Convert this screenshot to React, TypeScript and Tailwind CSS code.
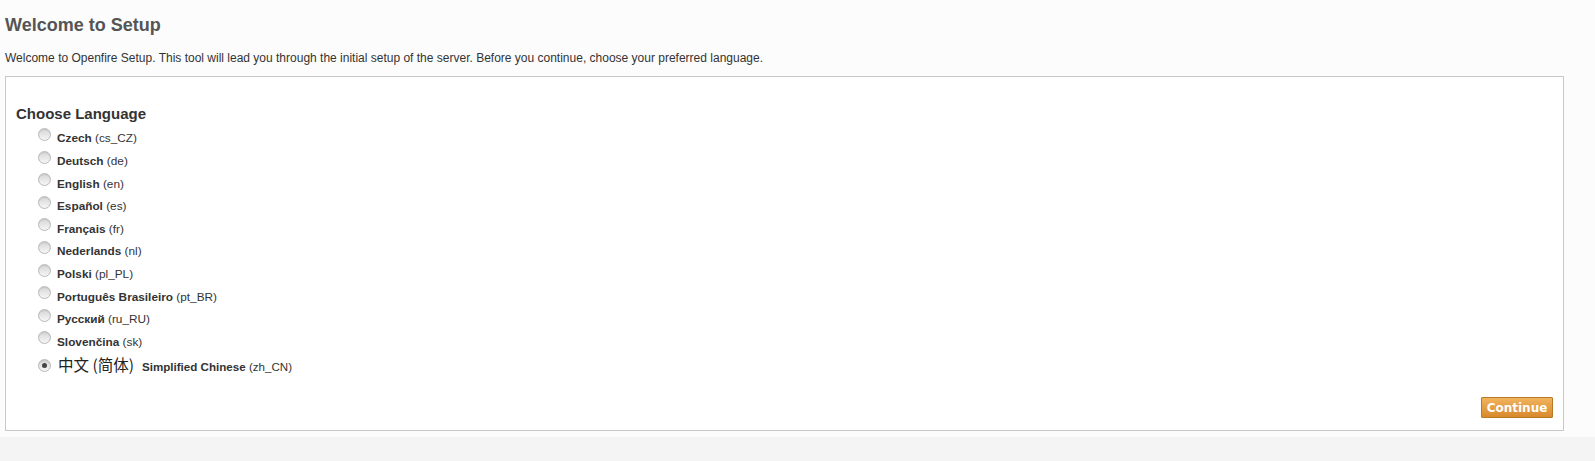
import React from 'react';

const languages: { name: string; code: string }[] = [
  { name: 'Czech', code: 'cs_CZ' },
  { name: 'Deutsch', code: 'de' },
  { name: 'English', code: 'en' },
  { name: 'Español', code: 'es' },
  { name: 'Français', code: 'fr' },
  { name: 'Nederlands', code: 'nl' },
  { name: 'Polski', code: 'pl_PL' },
  { name: 'Português Brasileiro', code: 'pt_BR' },
  { name: 'Русский', code: 'ru_RU' },
  { name: 'Slovenčina', code: 'sk' },
];

function Radio({ checked }: { checked?: boolean }) {
  return (
    <span className="relative inline-flex h-[13px] w-[13px] shrink-0 items-center justify-center rounded-full border border-[#b9b9b9] bg-gradient-to-b from-[#d6d6d6] to-[#f6f6f6] shadow-[inset_0_1px_1px_rgba(0,0,0,0.08)]">
      {checked && <span className="h-[5px] w-[5px] rounded-full bg-[#444]" />}
    </span>
  );
}

export default function App() {
  return (
    <div className="h-[461px] bg-[#f4f4f4] font-['Liberation_Sans',Arial,sans-serif] text-[#333]">
      <div className="bg-[#fcfcfc] pl-[5px] pr-[31px] pt-[14px] pb-[6px]">
        <h1 className="text-[18px] font-bold leading-[22px] text-[#555]">Welcome to Setup</h1>
        <p className="mt-[15px] text-[12px] leading-[14px] text-[#333]">
          Welcome to Openfire Setup. This tool will lead you through the initial setup of the server. Before you continue, choose your preferred language.
        </p>
        <div className="mt-[11px] flex h-[355px] flex-col border border-[#c9c9c9] bg-white pl-[10px] pr-[10px] pt-[28px]">
          <h2 className="text-[15px] font-bold leading-[18px] text-[#333]">Choose Language</h2>
          <ul className="mt-[5px] pl-[22px]">
            {languages.map((l) => (
              <li key={l.code} className="flex h-[22.6px] items-center gap-[6px] text-[11.8px]">
                <span className="-mt-[4px]"><Radio /></span>
                <span>
                  <b>{l.name}</b> ({l.code})
                </span>
              </li>
            ))}
            <li className="flex h-[22px] items-center gap-[7px] text-[11.6px]">
              <span className="-mt-[3px]"><Radio checked /></span>
              <span className="flex items-baseline gap-[8px]">
                <span className="font-['Noto_Sans_CJK_SC','Liberation_Sans',sans-serif] text-[15.5px] text-[#222]">中文 (简体)</span>
                <span>
                  <b>Simplified Chinese</b> (zh_CN)
                </span>
              </span>
            </li>
          </ul>
          <div className="mt-auto mb-[12px] flex justify-end">
            <button className="h-[21px] w-[72px] rounded-[1px] border border-[#b97a27] bg-gradient-to-b from-[#f0b35c] to-[#d9892b] font-['DejaVu_Sans',Verdana,sans-serif] text-[12px] font-bold text-white">
              Continue
            </button>
          </div>
        </div>
      </div>
    </div>
  );
}
